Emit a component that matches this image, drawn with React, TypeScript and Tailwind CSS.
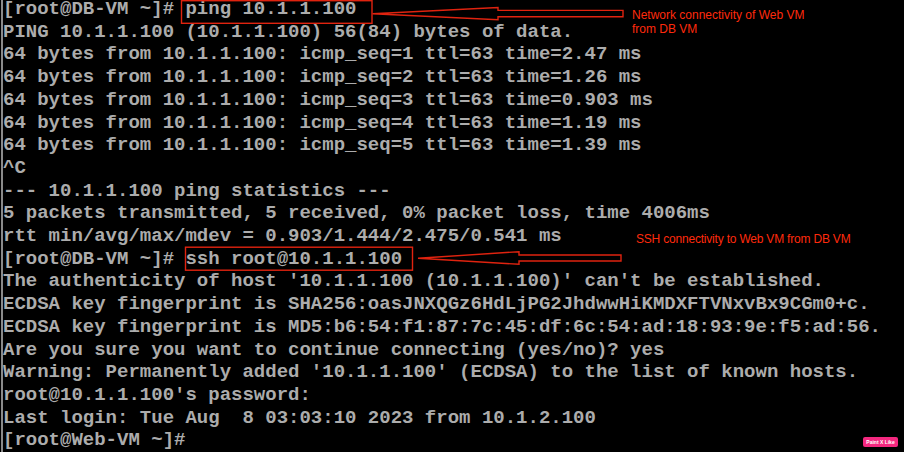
import React from "react";

const lines = [
  "[root@DB-VM ~]# ping 10.1.1.100",
  "PING 10.1.1.100 (10.1.1.100) 56(84) bytes of data.",
  "64 bytes from 10.1.1.100: icmp_seq=1 ttl=63 time=2.47 ms",
  "64 bytes from 10.1.1.100: icmp_seq=2 ttl=63 time=1.26 ms",
  "64 bytes from 10.1.1.100: icmp_seq=3 ttl=63 time=0.903 ms",
  "64 bytes from 10.1.1.100: icmp_seq=4 ttl=63 time=1.19 ms",
  "64 bytes from 10.1.1.100: icmp_seq=5 ttl=63 time=1.39 ms",
  "^C",
  "--- 10.1.1.100 ping statistics ---",
  "5 packets transmitted, 5 received, 0% packet loss, time 4006ms",
  "rtt min/avg/max/mdev = 0.903/1.444/2.475/0.541 ms",
  "[root@DB-VM ~]# ssh root@10.1.1.100",
  "The authenticity of host '10.1.1.100 (10.1.1.100)' can't be established.",
  "ECDSA key fingerprint is SHA256:oasJNXQGz6HdLjPG2JhdwwHiKMDXFTVNxvBx9CGm0+c.",
  "ECDSA key fingerprint is MD5:b6:54:f1:87:7c:45:df:6c:54:ad:18:93:9e:f5:ad:56.",
  "Are you sure you want to continue connecting (yes/no)? yes",
  "Warning: Permanently added '10.1.1.100' (ECDSA) to the list of known hosts.",
  "root@10.1.1.100's password:",
  "Last login: Tue Aug  8 03:03:10 2023 from 10.1.2.100",
  "[root@Web-VM ~]#",
];

export default function App() {
  return (
    <div className="relative w-[904px] h-[452px] overflow-hidden bg-black">
      <div className="flex h-full">
        <div className="w-[1px] shrink-0" />
        <div className="w-[2px] shrink-0 bg-[#8a8a8a]" />
        <div
          className="-mt-[2px] whitespace-pre text-[19px] font-bold leading-[22.7px] text-[#acacac]"
          style={{ fontFamily: '"Liberation Mono", "DejaVu Sans Mono", monospace' }}
        >
          {lines.map((l, i) => (
            <div key={i}>{l}</div>
          ))}
        </div>
      </div>

      <svg
        className="pointer-events-none absolute left-0 top-0"
        width="904"
        height="452"
        viewBox="0 0 904 452"
      >
        <g fill="none" stroke="#e0230f" strokeWidth="1.4">
          <rect x="181.5" y="0.7" width="190.5" height="22.6" />
          <rect x="185.5" y="247.2" width="227" height="23" />
          <polygon points="372.5,13.8 498,7.6 498,10.4 623,10.4 623,16.7 498,16.7 498,19.8" />
          <polygon points="418,258.3 519,251.7 519,255 621,255 621,261 519,261 519,264.3" />
        </g>
      </svg>

      <div
        className="absolute left-[632px] top-[8px] text-[12px] leading-[14px] text-[#ff2a0c]"
        style={{ fontFamily: '"Liberation Sans", Arial, sans-serif' }}
      >
        <div>Network connectivity of Web VM</div>
        <div>from DB VM</div>
      </div>
      <div
        className="absolute left-[636px] top-[232px] text-[12px] leading-[14px] tracking-[-0.2px] text-[#ff2a0c]"
        style={{ fontFamily: '"Liberation Sans", Arial, sans-serif' }}
      >
        SSH connectivity to Web VM from DB VM
      </div>

      <div
        className="absolute left-[863px] top-[437px] flex h-[10px] w-[35px] items-center justify-center rounded-[2px] bg-[#f4287f] text-[5px] font-bold leading-none text-white"
        style={{ fontFamily: '"Liberation Sans", Arial, sans-serif' }}
      >
        Paint X Like
      </div>
    </div>
  );
}
